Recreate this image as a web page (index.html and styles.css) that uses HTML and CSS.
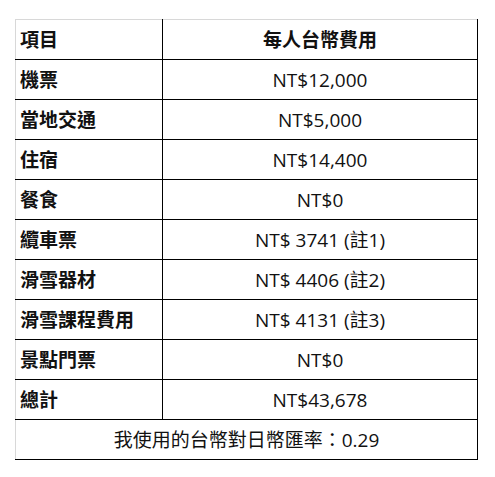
FILE: index.html
```html
<!DOCTYPE html>
<html lang="zh-Hant">
<head>
<meta charset="utf-8">
<link rel="stylesheet" href="styles.css">
</head>
<body>
<table class="cost">
  <tr class="first"><td class="item">項目</td><td class="val head">每人台幣費用</td></tr>
  <tr><td class="item">機票</td><td class="val">NT$12,000</td></tr>
  <tr><td class="item">當地交通</td><td class="val">NT$5,000</td></tr>
  <tr><td class="item">住宿</td><td class="val">NT$14,400</td></tr>
  <tr><td class="item">餐食</td><td class="val">NT$0</td></tr>
  <tr><td class="item">纜車票</td><td class="val">NT$ 3741 (註1)</td></tr>
  <tr><td class="item">滑雪器材</td><td class="val">NT$ 4406 (註2)</td></tr>
  <tr><td class="item">滑雪課程費用</td><td class="val">NT$ 4131 (註3)</td></tr>
  <tr><td class="item">景點門票</td><td class="val">NT$0</td></tr>
  <tr><td class="item">總計</td><td class="val">NT$43,678</td></tr>
  <tr><td class="foot" colspan="2">我使用的台幣對日幣匯率：0.29</td></tr>
</table>
</body>
</html>
```
FILE: styles.css
```css
html, body {
  margin: 0;
  padding: 0;
  background: #fff;
}
body {
  padding: 19px 0 0 15px;
  font-family: "Open Sans", "Noto Sans CJK TC", sans-serif;
  font-size: 19px;
  color: #111;
}
.cost {
  border-collapse: collapse;
  width: 463px;
}
.cost td {
  border: 1px solid #000;
  height: 40px;
  padding: 0 4px;
  line-height: 20px;
  box-sizing: border-box;
  vertical-align: middle;
}
.cost tr.first td {
  border-top-color: #d8d8d8;
}
.cost td.item,
.cost td.foot {
  border-left-color: #d8d8d8;
}
.item {
  width: 147px;
  font-weight: bold;
}
.val {
  text-align: center;
}
.head {
  font-weight: bold;
}
.foot {
  text-align: center;
}
```
